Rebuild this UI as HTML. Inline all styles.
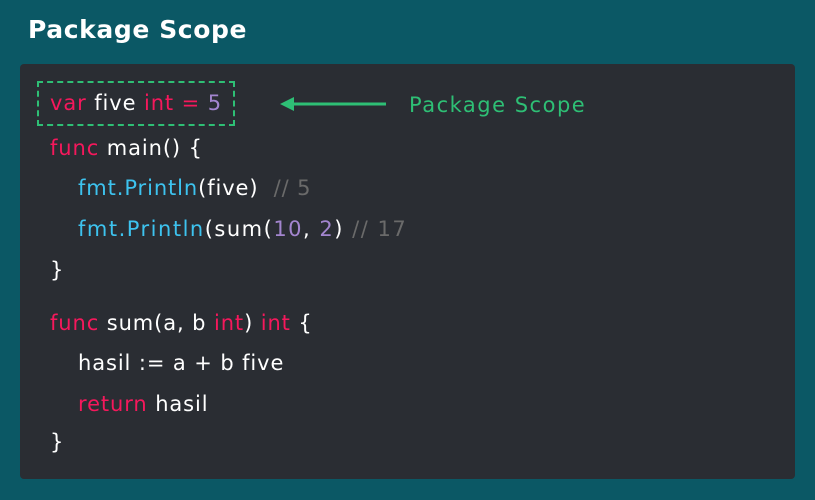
<!DOCTYPE html>
<html><head><style>
body{margin:0;width:815px;height:500px;background:#0b5865;font-family:"DejaVu Sans",sans-serif;position:relative;overflow:hidden}
h1{position:absolute;left:28px;top:15px;margin:0;font-size:25px;color:#fff;font-weight:bold;letter-spacing:0.6px}
.panel{position:absolute;left:20px;top:64px;width:775px;height:415px;background:#2a2d33;border-radius:4px}
.l{position:absolute;font-size:21px;letter-spacing:0.9px;color:#fff;white-space:pre;line-height:24px}
.k{color:#f5185c}.n{color:#a385cf}.c{color:#3dc3ef}.g{color:#6a6a6a}
.box{position:absolute;left:37px;top:81px;width:198px;height:45px;border:2px dashed #2ebf75;box-sizing:border-box}
</style></head><body>
<h1>Package Scope</h1>
<div class="panel"></div>
<div class="box"></div>
<div class="l" style="left:50px;top:91px"><span class="k">var</span> five <span class="k">int</span> <span class="k">=</span> <span class="n">5</span></div>
<svg style="position:absolute;left:278px;top:94px" width="110" height="20"><path d="M2 10 L16 3 L16 17 Z" fill="#2ebf75"/><line x1="14" y1="10" x2="108" y2="10" stroke="#2ebf75" stroke-width="3"/></svg>
<div class="l" style="left:409px;top:93px;color:#2ebf75;letter-spacing:1.5px">Package Scope</div>
<div class="l" style="left:50px;top:136px"><span class="k">func</span> main() {</div>
<div class="l" style="left:78px;top:176px"><span class="c">fmt.Println</span>(five)  <span class="g">// 5</span></div>
<div class="l" style="left:78px;top:217px;letter-spacing:1.5px"><span class="c">fmt.Println</span>(sum(<span class="n">10</span>, <span class="n">2</span>) <span class="g">// 17</span></div>
<div class="l" style="left:50px;top:258px">}</div>
<div class="l" style="left:50px;top:311px"><span class="k">func</span> sum(a, b <span class="k">int</span>) <span class="k">int</span> {</div>
<div class="l" style="left:78px;top:351px">hasil := a + b five</div>
<div class="l" style="left:78px;top:392px"><span class="k">return</span> hasil</div>
<div class="l" style="left:50px;top:430px">}</div>
</body></html>
